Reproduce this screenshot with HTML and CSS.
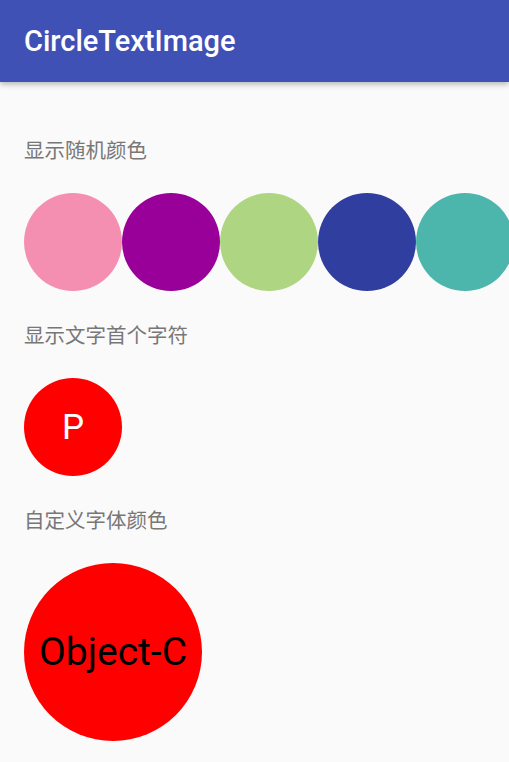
FILE: index.html
```html
<!DOCTYPE html>
<html lang="zh-CN">
<head>
    <meta charset="UTF-8">
    <meta name="viewport" content="width=device-width, initial-scale=1.0">
    <title>CircleTextImage</title>
    <link rel="stylesheet" href="styles.css">
</head>
<body>
    <header class="toolbar">
        <h1>CircleTextImage</h1>
    </header>

    <main class="content">
        <section class="group">
            <p class="label">显示随机颜色</p>
            <div class="circle-row">
                <div class="circle pink"></div>
                <div class="circle purple"></div>
                <div class="circle green"></div>
                <div class="circle navy"></div>
                <div class="circle teal"></div>
            </div>
        </section>

        <section class="group">
            <p class="label">显示文字首个字符</p>
            <div class="circle red letter">P</div>
        </section>

        <section class="group">
            <p class="label">自定义字体颜色</p>
            <div class="circle red big">Object-C</div>
        </section>
    </main>
</body>
</html>
```

FILE: styles.css
```css
* {
    margin: 0;
    padding: 0;
    box-sizing: border-box;
}

body {
    font-family: Roboto, "Noto Sans CJK SC", sans-serif;
    background-color: #FAFAFA;
    min-height: 100vh;
    overflow: hidden;
}

.toolbar {
    height: 82px;
    background-color: #3F51B5;
    display: flex;
    align-items: center;
    padding: 0 24px;
    box-shadow: 0 2px 6px rgba(0, 0, 0, 0.3);
    position: relative;
    z-index: 1;
}

.toolbar h1 {
    color: #fff;
    font-size: 29px;
    font-weight: 500;
}

.content {
    padding: 55px 0 0 24px;
}

.group {
    margin-bottom: 31px;
}

.label {
    font-family: "Noto Sans CJK SC", sans-serif;
    font-size: 20.5px;
    line-height: 25px;
    color: #777777;
    margin-bottom: 31px;
}

.circle-row {
    display: flex;
}

.circle {
    flex-shrink: 0;
    width: 98px;
    height: 98px;
    border-radius: 50%;
    display: flex;
    align-items: center;
    justify-content: center;
}

.pink { background-color: #F48FB1; }
.purple { background-color: #990099; }
.green { background-color: #AED581; }
.navy { background-color: #303F9F; }
.teal { background-color: #4DB6AC; }
.red { background-color: #FF0000; }

.letter {
    color: #fff;
    font-size: 35px;
}

.big {
    width: 178px;
    height: 178px;
    color: #000;
    font-size: 39px;
}
```
